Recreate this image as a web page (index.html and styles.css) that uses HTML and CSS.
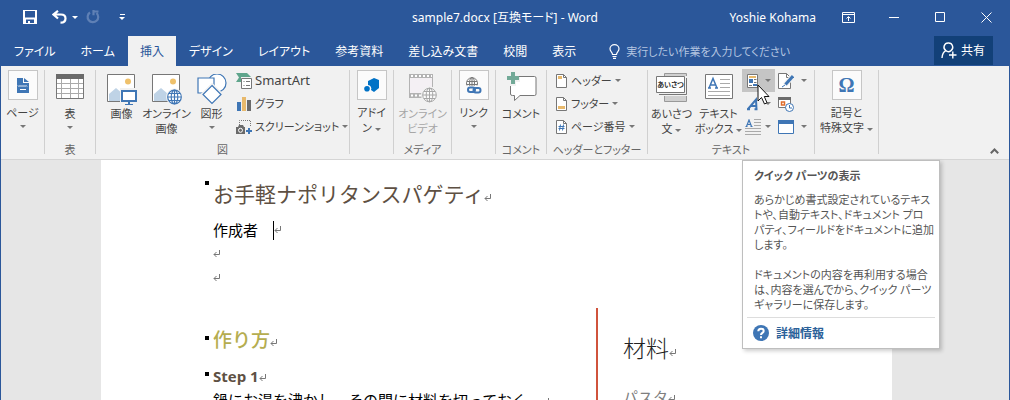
FILE: index.html
```html
<!DOCTYPE html>
<html lang="ja">
<head>
  <meta charset="UTF-8">
  <meta name="viewport" content="width=device-width, initial-scale=1.0">
  <title>sample7.docx [互換モード] - Word</title>
  <link rel="stylesheet" href="styles.css">
</head>
<body>
  <div class="window">
    <header class="titlebar">
      <div class="quick-access">
        <button class="qa-save" aria-label="上書き保存">
          <svg width="14" height="14" viewBox="0 0 14 14"><path fill="#fff" fill-rule="evenodd" d="M0 0h14v14H0zM2 1v6.500h10V1zM3 9.500v3.500h2v-2h2v2h4V9.500z"/></svg>
        </button>
        <button class="qa-undo" aria-label="元に戻す">
          <svg width="15" height="14" viewBox="0 0 15 14"><path fill="none" stroke="#fff" stroke-width="2.200" d="M6 .8L1.500 4.500L6 8.500M2 4.500h7c3 0 4.500 1.800 4.500 4S12 12.700 8.500 12.700"/></svg>
        </button>
        <button class="qa-drop" aria-label="元に戻す一覧"><span class="arrow"></span></button>
        <button class="qa-redo" aria-label="繰り返し">
          <svg width="14" height="14" viewBox="0 0 14 14"><path fill="none" stroke="#5f80b5" stroke-width="2.200" d="M4 2.500A5.300 5.300 0 1 0 10.500 3M7.500 0v5.200M7 1.500h5.500"/></svg>
        </button>
        <button class="qa-custom" aria-label="クイック アクセスのカスタマイズ"><span class="bar"></span><span class="arrow"></span></button>
      </div>
      <div class="doc-name">sample7.docx [互換モード] - Word</div>
      <div class="window-controls">
        <span class="user">Yoshie Kohama</span>
        <button aria-label="リボンの表示オプション">
          <svg width="13" height="11" viewBox="0 0 13 11"><path fill="none" stroke="#fff" d="M.5.5h12v10H.5zM.5 2.500h12M6.500 9V5M4.500 6.500l2-2l2 2"/></svg>
        </button>
        <button aria-label="最小化">
          <svg width="10" height="11" viewBox="0 0 10 11"><path stroke="#fff" d="M0 5.500h10"/></svg>
        </button>
        <button aria-label="最大化">
          <svg width="10" height="10" viewBox="0 0 10 10"><path fill="none" stroke="#fff" d="M.5.5h9v9h-9z"/></svg>
        </button>
        <button aria-label="閉じる">
          <svg width="11" height="11" viewBox="0 0 11 11"><path stroke="#fff" d="M.5.5l10 10M10.500.5l-10 10"/></svg>
        </button>
      </div>
    </header>

    <nav class="tabs">
      <button class="tab">ファイル</button>
      <button class="tab">ホーム</button>
      <button class="tab active">挿入</button>
      <button class="tab">デザイン</button>
      <button class="tab">レイアウト</button>
      <button class="tab">参考資料</button>
      <button class="tab">差し込み文書</button>
      <button class="tab">校閲</button>
      <button class="tab">表示</button>
      <label class="tell-me">
        <svg width="11" height="15" viewBox="0 0 11 15"><path fill="none" stroke="#fff" stroke-width="1.200" d="M3.500 10.500C3.500 8 1 7.500 1 4.800a4.500 4.200 0 0 1 9 0C10 7.500 7.500 8 7.500 10.500zM3.500 12.500h4M4 14.300h3"/></svg>
        <input type="text" placeholder="実行したい作業を入力してください">
      </label>
      <button class="share">
        <svg width="16" height="17" viewBox="0 0 16 17"><path fill="none" stroke="#fff" stroke-width="1.400" d="M7.500 1a4.200 4.200 0 0 1 2.500 7.600M7.500 1a4.200 4.200 0 0 0-2.600 7.700C2.500 10 1.200 12.500 1 16M4.900 8.700C6.300 9.800 8.500 9.800 10 8.600M8 13h7.500M11.800 9.500v7"/></svg>
        共有
      </button>
    </nav>

    <div class="ribbon">
      <section class="group group-box">
        <div class="items">
          <button class="big boxed">
            <span class="icon"><svg width="12" height="15" viewBox="0 0 12 15"><path fill="#3f76b5" d="M0 0h6v5h6v10H0zM7 0l5 4H7z"/><path fill="none" stroke="#fff" d="M1 7.500l1 1l1-1l1 1l1-1l1 1l1-1l1 1l1-1l1 1M3 11.500h6"/></svg></span>
            <span class="text">ページ</span><span class="arrow"></span>
          </button>
        </div>
      </section>

      <section class="group group-table">
        <div class="items">
          <button class="big">
            <span class="icon"><svg width="28" height="26" viewBox="0 0 28 26"><path fill="#fff" stroke="#777" d="M.5.5h27v24H.5z"/><path fill="#6a6a6a" d="M0 0h28v5H0z"/><path fill="none" stroke="#aaa" d="M1 9.500h26M1 14.500h26M1 19.500h26M5.500 5v19M14.500 5v19M22.500 5v19"/></svg></span>
            <span class="text">表</span><span class="arrow"></span>
          </button>
        </div>
        <div class="group-name">表</div>
      </section>

      <section class="group group-figure">
        <div class="items">
          <button class="big">
            <span class="icon"><svg width="30" height="32" viewBox="0 0 30 32"><path fill="#fff" stroke="#777" d="M.5.5h27v27H.5z"/><circle cx="21" cy="7.500" r="3" fill="#efc16b"/><path fill="#bfd3e6" d="M2 20l7-6l7 6v7H2z"/><path fill="#f1f1f1" d="M13 14h17v18H13z"/><path fill="#fff" stroke="#3f76b5" stroke-width="2" d="M15 17h14v10H15z"/><path fill="#3f76b5" d="M21 28h2v2h3v1h-8v-1h3z"/></svg></span>
            <span class="text">画像</span>
          </button>
          <button class="big">
            <span class="icon"><svg width="30" height="32" viewBox="0 0 30 32"><path fill="#fff" stroke="#777" d="M.5.5h27v27H.5z"/><circle cx="21" cy="7.500" r="3" fill="#efc16b"/><path fill="#bfd3e6" d="M2 20l7-6l7 6v7H2z"/><circle cx="22.500" cy="23" r="8.500" fill="#f1f1f1"/><g fill="#fff" stroke="#3f76b5" stroke-width="1.200"><circle cx="22.500" cy="23" r="6.800"/><ellipse cx="22.500" cy="23" rx="3.300" ry="6.800"/><path d="M22.500 16v14M16 23h13M17 19.500h11M17 26.500h11"/></g></svg></span>
            <span class="text">オンライン<br>画像</span>
          </button>
          <button class="big">
            <span class="icon"><svg width="30" height="32" viewBox="0 0 30 32"><g fill="#fff" stroke="#3f76b5" stroke-width="1.200"><circle cx="20" cy="9" r="9"/><path d="M1 4h16v15H1z"/><path d="M15 11.500l9 9l-9 9l-9-9z" stroke="#f1f1f1" stroke-width="4"/><path d="M15 11.500l9 9l-9 9l-9-9z"/></g></svg></span>
            <span class="text">図形</span><span class="arrow"></span>
          </button>
          <div class="stack">
            <button class="small"><svg width="16" height="16" viewBox="0 0 16 16"><path fill="#5fa58c" d="M0 0h11l4 4H5v5H0l3-4.500z"/><path fill="#fff" stroke="#777" d="M5.500 5.500h10v10h-10z"/><path stroke="#777" d="M7.500 8.500h1M10 8.500h4M7.500 12.500h1M10 12.500h4"/></svg><span class="latin">SmartArt</span></button>
            <button class="small"><svg width="16" height="16" viewBox="0 0 16 16"><path fill="#3f76b5" d="M1 6h4v9H1z"/><path fill="#e8b96c" d="M6 1h4v14H6z"/><path fill="#6a6a6a" d="M11 4h4v11h-4z"/></svg><span>グラフ</span></button>
            <button class="small"><svg width="16" height="16" viewBox="0 0 16 16"><path fill="none" stroke="#777" stroke-dasharray="1 1" d="M3.500 6V1.500h11V8"/><path fill="#6a6a6a" d="M0 8h2l1-2h4l1 2h1v7H0z"/><circle cx="4.500" cy="11.300" r="2" fill="none" stroke="#fff"/><path stroke="#3f76b5" stroke-width="2" d="M10 12h6M13 9v6"/></svg><span>スクリーンショット</span><span class="arrow"></span></button>
          </div>
        </div>
        <div class="group-name">図</div>
      </section>

      <section class="group group-box">
        <div class="items">
          <button class="big boxed">
            <span class="icon"><svg width="15" height="15" viewBox="0 0 15 15"><path fill="#0072c6" d="M4 3l6-3l5 2v8l-5 4l-3-2a3.500 3.500 0 0 0-3-5z"/><circle cx="3" cy="10.800" r="2.800" fill="#0072c6"/></svg></span>
            <span class="text">アドイ<br>ン<span class="arrow"></span></span>
          </button>
        </div>
      </section>

      <section class="group group-media">
        <div class="items">
          <button class="big" disabled>
            <span class="icon"><svg width="28" height="30" viewBox="0 0 28 30"><path fill="#f4f0f4" stroke="#b3b3b3" d="M.5.500h23v23H.5z"/><path fill="#b3b3b3" d="M0 0h24v4H0zM0 19h24v5H0z"/><path stroke="#fff" stroke-width="2" stroke-dasharray="2 2" d="M2 2h21M2 21.500h21"/><circle cx="20.500" cy="21" r="8.500" fill="#f1f1f1"/><g fill="#fafafa" stroke="#a6a6a6"><circle cx="20.500" cy="21" r="6.800"/><ellipse cx="20.500" cy="21" rx="3.300" ry="6.800"/><path d="M20.500 14v14M14 21h13M15 17.500h11M15 24.500h11"/></g></svg></span>
            <span class="text">オンライン<br>ビデオ</span>
          </button>
        </div>
        <div class="group-name">メディア</div>
      </section>

      <section class="group group-box">
        <div class="items">
          <button class="big boxed">
            <span class="icon"><svg width="16" height="17" viewBox="0 0 16 17"><g fill="none" stroke="#777"><path d="M1 8.500a5.500 5.500 0 1 1 10 0"/><ellipse cx="6" cy="6" rx="2.500" ry="5.500"/><path d="M6 1v8M1 4.500h10M.5 7.500h11"/></g><path fill="#fafafa" d="M1 9h14v8H1z"/><g fill="none" stroke="#3f76b5" stroke-width="2"><rect x="2" y="10.500" width="7" height="4.500" rx="2.200"/><rect x="7.500" y="11" width="7" height="4.500" rx="2.200"/></g></svg></span>
            <span class="text">リンク</span><span class="arrow"></span>
          </button>
        </div>
      </section>

      <section class="group group-comment">
        <div class="items">
          <button class="big">
            <span class="icon icon-high"><svg width="31" height="30" viewBox="0 0 31 30"><path fill="#fff" stroke="#777" d="M4.500 4.500h24q1.500 0 1.500 1.500v16q0 1.500-1.500 1.500H14L8.500 28.500v-5h-2q-2 0-2-1.500z"/><path fill="#f1f1f1" d="M0 0h10v5h4v5h-4v4H4V4H0z"/><path fill="#72a997" d="M5 0h4v4h4v4H9v4H5V8H1V4h4z"/></svg></span>
            <span class="text">コメント</span>
          </button>
        </div>
        <div class="group-name">コメント</div>
      </section>

      <section class="group group-header">
        <div class="items">
          <div class="stack">
            <button class="small"><svg width="14" height="16" viewBox="0 0 14 16"><path fill="#fff" stroke="#777" d="M2.500 1.500h7l3 3v10h-10z"/><path fill="none" stroke="#777" d="M9.500 1.500v3h3"/><path fill="#e8b96c" d="M4 3h4v3H4z"/></svg><span>ヘッダー</span><span class="arrow"></span></button>
            <button class="small"><svg width="14" height="16" viewBox="0 0 14 16"><path fill="#fff" stroke="#777" d="M2.500 1.500h7l3 3v10h-10z"/><path fill="none" stroke="#777" d="M9.500 1.500v3h3"/><path fill="#e8b96c" d="M4 10h7v3H4z"/></svg><span>フッター</span><span class="arrow"></span></button>
            <button class="small"><svg width="14" height="16" viewBox="0 0 14 16"><path fill="#fff" stroke="#777" d="M2.500 1.500h7l3 3v10h-10z"/><path fill="none" stroke="#777" d="M9.500 1.500v3h3"/><path stroke="#3f76b5" d="M6.500 5.500l-1 6M9.500 5.500l-1 6M4.500 7.500h6M4.500 9.500h6"/></svg><span>ページ番号</span><span class="arrow"></span></button>
          </div>
        </div>
        <div class="group-name">ヘッダーとフッター</div>
      </section>

      <section class="group group-text">
        <div class="items">
          <button class="big">
            <span class="icon icon-high"><svg width="32" height="31" viewBox="0 0 32 31"><path fill="#d0d0d0" stroke="#999" d="M8.500 1.500h22v28h-22z"/><path fill="#f1f1f1" d="M2 4h30v20H2z"/><path fill="none" stroke="#777" d="M30.500 6v16.500H3"/><path fill="#fff" stroke="#777" d="M.5 4.500h28v16H.5z"/><text class="greeting" x="14.500" y="15" text-anchor="middle">あいさつ</text></svg></span>
            <span class="text">あいさつ<br>文<span class="arrow"></span></span>
          </button>
          <button class="big">
            <span class="icon"><svg width="28" height="26" viewBox="0 0 28 26"><path fill="#fff" stroke="#777" d="M.5.5h27v24H.5z"/><path stroke="#aaa" d="M15 5.500h10M15 9.500h10M15 13.500h10M3 17.500h22M3 21.500h22"/><path fill="none" stroke="#3f76b5" stroke-width="1.500" d="M4 14L8 4.500L12 14M5.500 11h5M3 14h3M10 14h3"/></svg></span>
            <span class="text">テキスト<br>ボックス<span class="arrow"></span></span>
          </button>
          <div class="stack">
            <div class="quick-parts">
              <button class="mini hover" aria-label="クイック パーツの表示" aria-describedby="quick-parts-tip"><svg width="16" height="16" viewBox="0 0 16 16"><path fill="#fff" stroke="#777" d="M2.500 1.500h10v13h-10z"/><path fill="#e8b96c" d="M4 3h7v2H4z"/><path fill="#3f76b5" d="M4 6h4v4H4z"/><path stroke="#777" d="M9 6.500h2.500M9 9.500h2.500M4 12.500h3"/><path fill="#3f76b5" d="M8 11h4v2H8z"/></svg><span class="arrow"></span></button>
              <svg class="cursor" width="14" height="21" viewBox="0 0 14 21"><path fill="#fff" stroke="#111" d="M1 1v16l3.500-3.500L7.500 20l2.500-1.200L7.300 12.500H12z"/></svg>
              <div class="tooltip" id="quick-parts-tip" role="tooltip">
                <h2>クイック パーツの表示</h2>
                <p>あらかじめ書式設定されているテキス<br>トや、自動テキスト、ドキュメント プロ<br>パティ、フィールドをドキュメントに追加<br>します。</p>
                <p>ドキュメントの内容を再利用する場合<br>は、内容を選んでから、クイック パーツ<br>ギャラリーに保存します。</p>
                <a class="more" href="#"><svg width="16" height="16" viewBox="0 0 16 16"><circle cx="8" cy="8" r="8" fill="#3f76b5"/><path fill="none" stroke="#fff" stroke-width="2" d="M5.300 6.200C5.300 2.800 10.700 3 10.700 6C10.700 8 8 7.800 8 10M8 11.300v2"/></svg>詳細情報</a>
              </div>
            </div>
            <button class="mini" aria-label="ワードアート"><svg width="16" height="16" viewBox="0 0 16 16"><path fill="none" stroke="#3f76b5" stroke-width="2" d="M3 13L11 3.500l.5 10M6 10h5.500M2 13.200h3M9.500 13.200h3"/></svg><span class="arrow"></span></button>
            <button class="mini" aria-label="ドロップ キャップ"><svg width="16" height="16" viewBox="0 0 16 16"><path fill="none" stroke="#3f76b5" stroke-width="1.200" d="M1.500 7.500L4 1l2.500 6.500M2 5.500h4M.5 7.500h2M5.500 7.500h2"/><path stroke="#aaa" d="M9 .5h7M9 3.500h7M9 6.500h7M0 9.500h16M0 12.500h16M0 15.500h16"/></svg><span class="arrow"></span></button>
          </div>
          <div class="stack stack-right">
            <button class="mini" aria-label="署名欄"><svg width="16" height="16" viewBox="0 0 16 16"><path fill="#fff" stroke="#777" d="M.5.5h8l4 4v11H.5z"/><path fill="none" stroke="#777" d="M8.500.5v4h4"/><path stroke="#f1f1f1" stroke-width="5" d="M15 3l-8 9"/><path stroke="#3f76b5" stroke-width="3" d="M15 3l-7.500 8.500"/><path stroke="#3f76b5" d="M7 12l-3 2"/></svg><span class="arrow"></span></button>
            <button class="mini" aria-label="日付と時刻"><svg width="16" height="16" viewBox="0 0 16 16"><path fill="#fff" stroke="#777" d="M.5 1.500h12v10H.5z"/><path fill="#6a6a6a" d="M0 1h13v3H0z"/><path fill="none" stroke="#e06c2b" stroke-width="1.500" d="M3.500 6h3v3h-3z"/><circle cx="11.500" cy="11.500" r="4" fill="#fff" stroke="#3f76b5"/><path fill="none" stroke="#3f76b5" d="M11.500 9v3H14"/></svg></button>
            <button class="mini" aria-label="オブジェクト"><svg width="16" height="16" viewBox="0 0 16 16"><path fill="#fff" stroke="#3f76b5" d="M.5 1.500h15v13H.5z"/><path fill="#3f76b5" d="M0 1h16v4H0z"/></svg><span class="arrow"></span></button>
          </div>
        </div>
        <div class="group-name">テキスト</div>
      </section>

      <section class="group group-symbol">
        <div class="items">
          <button class="big boxed">
            <span class="icon omega">Ω</span>
            <span class="text">記号と<br>特殊文字<span class="arrow"></span></span>
          </button>
        </div>
      </section>

      <button class="collapse" aria-label="リボンを折りたたむ">
        <svg width="9" height="6" viewBox="0 0 9 6"><path fill="none" stroke="#666" stroke-width="2" d="M.8 5.200L4.500 1.500l3.700 3.700"/></svg>
      </button>
    </div>

    <main class="workspace">
      <article class="page">
        <h1 class="heading doc-title">お手軽ナポリタンスパゲティ<span class="ret"></span></h1>
        <p class="line">作成者　<span class="caret"></span><span class="ret"></span></p>
        <p class="line"><span class="ret"></span></p>
        <p class="line"><span class="ret"></span></p>
        <div class="columns">
          <section class="steps">
            <h2 class="heading">作り方<span class="ret"></span></h2>
            <h3 class="heading">Step 1<span class="ret"></span></h3>
            <p>鍋にお湯を沸かし、その間に材料を切っておく。<span class="ret"></span></p>
          </section>
          <aside class="ingredients">
            <h2>材料<span class="ret"></span></h2>
            <p>パスタ<span class="ret"></span></p>
          </aside>
        </div>
      </article>
    </main>
  </div>
  <script>
    // paragraph marks shown at the end of every line
    document.querySelectorAll('.ret').forEach(mark => {
      mark.innerHTML = '<svg width="8" height="8" viewBox="0 0 8 8"><path fill="none" stroke="#777" d="M6.500 0v4.500H1M3.500 2L1 4.500L3.500 7"/></svg>';
    });
  </script>
</body>
</html>
```
FILE: styles.css
```css
* {
  box-sizing: border-box;
}
body {
  margin: 0;
  font-family: "Noto Sans", "Noto Sans CJK JP", sans-serif;
  font-size: 12px;
  line-height: 15px;
  color: #444;
}
h1, h2, h3, p {
  margin: 0;
}
button, input {
  font: inherit;
  color: inherit;
  background: none;
  border: none;
  padding: 0;
}
svg {
  display: block;
  flex: none;
}
.window {
  display: flex;
  flex-direction: column;
  height: 100vh;
  overflow: hidden;
  border: 1px solid #2b579a;
  border-top: none;
  border-bottom: none;
  font-feature-settings: "palt";
}
.arrow {
  display: inline-block;
  flex: none;
  border: 3px solid transparent;
  border-top-color: #777;
  border-bottom: none;
  vertical-align: middle;
}

/* title bar */
.titlebar {
  display: grid;
  grid-template-columns: 1fr auto 1fr;
  align-items: center;
  height: 36px;
  padding-bottom: 2px;
  flex: none;
  background: #2b579a;
  color: #fff;
}
.quick-access {
  display: flex;
  align-items: center;
  padding-left: 22px;
}
.quick-access .arrow {
  border-top-color: #fff;
}
.qa-undo {
  margin-left: 15px;
}
.qa-drop {
  margin-left: 5px;
  line-height: 0;
}
.qa-redo {
  margin-left: 8px;
}
.qa-custom {
  display: flex;
  flex-direction: column;
  align-items: center;
  gap: 2px;
  margin-left: 19px;
}
.qa-custom .bar {
  width: 5px;
  height: 1px;
  background: #fff;
}
.window-controls {
  display: flex;
  align-items: center;
  justify-content: flex-end;
}
.user {
  margin-right: 9px;
}
.window-controls button {
  display: flex;
  align-items: center;
  justify-content: center;
  width: 46px;
  height: 32px;
}

/* tabs */
.tabs {
  display: flex;
  gap: 1px;
  height: 30px;
  flex: none;
  padding-left: 1px;
  background: #2b579a;
  color: #fff;
}
.tab {
  padding: 0 12px;
}
.tab.active {
  background: #f1f1f1;
  color: #2b579a;
}
.tell-me {
  display: flex;
  flex: 1;
  align-items: center;
  gap: 6px;
  margin-left: 20px;
}
.tell-me input {
  flex: 1;
  min-width: 0;
  font-size: 11px;
}
.tell-me input::placeholder {
  color: #b4c5e0;
  opacity: 1;
}
.share {
  display: flex;
  align-items: center;
  gap: 4px;
  height: 29px;
  margin-right: 16px;
  padding: 0 8px 0 7px;
  background: #124078;
}

/* ribbon */
.ribbon {
  display: flex;
  height: 94px;
  flex: none;
  background: #f1f1f1;
  border-bottom: 1px solid #d5d5d5;
  font-size: 11px;
}
.group {
  display: flex;
  flex-direction: column;
  flex: none;
  justify-content: space-between;
  padding: 3px 1px 2px 0;
  background: linear-gradient(#d0d0d0, #d0d0d0) right 4px / 1px 84px no-repeat;
}
.group-box {
  width: 44px;
}
.group-table, .group-comment {
  width: 51px;
}
.group-figure {
  width: 254px;
}
.group-media {
  width: 58px;
}
.group-header {
  width: 101px;
}
.group-text {
  width: 167px;
}
.group-symbol {
  width: 64px;
}
.items {
  display: flex;
  justify-content: center;
}
.group-figure .items, .group-text .items, .group-header .items {
  justify-content: flex-start;
}
.group-figure .items {
  padding-left: 3px;
}
.group-header .items {
  padding-left: 7px;
}
.group-name {
  text-align: center;
  color: #666;
}
.big {
  display: flex;
  flex-direction: column;
  align-items: center;
  width: 45px;
  padding-top: 1px;
}
.group-text .big {
  width: 47px;
}
.big .icon {
  display: flex;
  justify-content: center;
  height: 36px;
  padding-top: 4px;
}
.big .icon-high {
  padding-top: 2px;
}
.big .text {
  white-space: nowrap;
}
.text .arrow {
  margin-left: 3px;
}
.big > .arrow {
  margin-top: 5px;
}
.big:disabled {
  color: #a6a6a6;
}
.boxed .icon {
  align-items: center;
  width: 30px;
  height: 30px;
  margin-bottom: 5px;
  padding: 0;
  background: #fbfbfb;
  border: 1px solid #c6c6c6;
}
.big .omega {
  font: bold 20px "Liberation Serif", serif;
  color: #3f76b5;
}
.greeting {
  font-size: 7px;
  font-weight: bold;
  fill: #333;
}
.stack {
  display: flex;
  flex-direction: column;
}
.group-figure .stack {
  margin-left: 2px;
}
.small {
  display: flex;
  align-items: center;
  gap: 3px;
  height: 23px;
  white-space: nowrap;
}
.latin {
  font-size: 13px;
}
.mini {
  display: flex;
  align-items: center;
  gap: 4px;
  width: 33px;
  height: 23px;
  padding-left: 3px;
}
.mini.hover {
  background: #c5c5c5;
}
.group-text .stack-right .mini {
  gap: 7px;
}
.collapse {
  align-self: flex-end;
  margin: 0 10px 5px auto;
}

/* quick parts tooltip */
.quick-parts {
  position: relative;
}
.cursor {
  position: absolute;
  top: 15px;
  left: 15px;
}
.tooltip {
  position: absolute;
  top: 91px;
  left: 0;
  width: 198px;
  z-index: 2;
  padding: 7px 4px;
  background: #fff;
  border: 1px solid #bebebe;
  box-shadow: 2px 2px 4px rgba(0, 0, 0, 0.2);
  white-space: nowrap;
  color: #555;
}
.tooltip h2, .tooltip p {
  margin: 0 7px 15px;
  font-size: 11px;
}
.tooltip h2 {
  margin-bottom: 9px;
}
.tooltip p:last-of-type {
  margin-bottom: 5px;
}
.more {
  display: flex;
  align-items: center;
  gap: 7px;
  padding: 7px 6px 0;
  border-top: 1px solid #ddd;
  font-size: 12px;
  font-weight: bold;
  color: #2b6199;
  text-decoration: none;
}

/* document */
.workspace {
  flex: 1;
  min-height: 0;
  padding: 0 117px 0 100px;
  background: #e6e6e6;
}
.page {
  height: 100%;
  padding: 19px 0 0 112px;
  background: #fff;
  color: #000;
  font-family: "Open Sans", "Noto Sans CJK JP", sans-serif;
  font-size: 15px;
  line-height: 24px;
  font-feature-settings: normal;
}
.page h1, .page h2, .page h3 {
  color: #5e5043;
}
.page .doc-title {
  font-size: 21px;
  font-weight: 400;
  line-height: 30px;
  margin-bottom: 9px;
}
.heading {
  position: relative;
}
.heading::before {
  content: "";
  position: absolute;
  top: 2px;
  left: -8px;
  width: 4px;
  height: 4px;
  background: #000;
}
.steps .heading::before {
  top: 8px;
}
.line {
  display: flex;
  align-items: center;
  min-height: 24px;
}
.ret {
  display: inline-block;
}
.caret {
  width: 1px;
  height: 19px;
  background: #000;
}
.columns {
  display: flex;
  margin-top: 18px;
}
.steps {
  width: 383px;
  padding-top: 20px;
  white-space: nowrap;
}
.page .steps h2 {
  font-size: 19px;
  font-weight: 500;
  color: #b5ad4f;
  margin-bottom: 12px;
}
.steps h3 {
  font-size: 15px;
}
.ingredients {
  flex: 1;
  min-height: 120px;
  padding: 24px 0 0 25px;
  border-left: 2px solid #d0533c;
  color: #7f7f7f;
}
.page .ingredients h2 {
  margin-bottom: 21px;
  font-size: 23px;
  font-weight: 300;
  line-height: 32px;
  color: #222;
}
```
